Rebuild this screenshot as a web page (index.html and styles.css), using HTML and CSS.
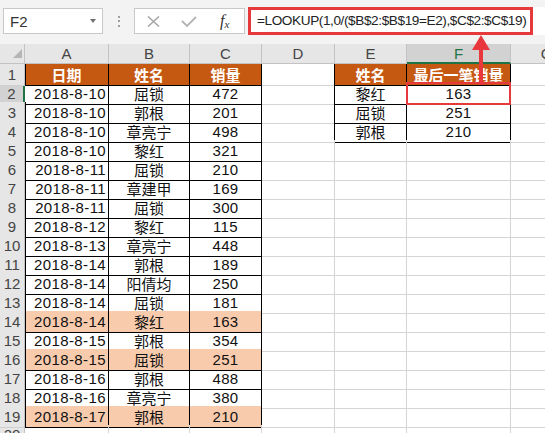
FILE: index.html
```
<!DOCTYPE html>
<html lang="zh">
<head>
<meta charset="utf-8">
<link rel="stylesheet" href="styles.css">
</head>
<body>
<div class="app">
  <div class="toolbar">
    <div class="namebox"><span class="name">F2</span><span class="drop"></span></div>
    <div class="grip"><i></i><i></i><i></i></div>
    <div class="fxbox">
      <svg class="ico-x" width="13" height="11" viewBox="0 0 13 11"><path d="M1 0.5 L12 10.5 M12 0.5 L1 10.5" stroke="#a8a8a8" stroke-width="1.6" fill="none"/></svg>
      <svg class="ico-ok" width="16" height="11" viewBox="0 0 16 11"><path d="M1 5 L6 10 L15 1" stroke="#b4b4b4" stroke-width="1.8" fill="none"/></svg>
      <span class="fx">f<sub>x</sub></span>
    </div>
    <div class="formula"><div class="fbox">=LOOKUP(1,0/($B$2:$B$19=E2),$C$2:$C$19)</div></div>
  </div>

  <div class="sheet">
    <div class="row colhdr">
      <div class="ch corner"><span class="tri"></span></div>
      <div class="ch">A</div><div class="ch">B</div><div class="ch">C</div><div class="ch">D</div><div class="ch">E</div><div class="ch chsel">F</div><div class="ch">G</div>
    </div>

    <div class="row"><div class="rh rb">1</div><div class="c t hd">日期</div><div class="c t hd">姓名</div><div class="c t hd">销量</div><div class="c dr"></div><div class="c t hd">姓名</div><div class="c t hd">最后一笔销量</div><div class="c"></div></div>
    <div class="row"><div class="rh rsel">2</div><div class="c t date">2018-8-10</div><div class="c t">屈锁</div><div class="c t num">472</div><div class="c dr"></div><div class="c t">黎红</div><div class="c t num sel">163</div><div class="c"></div></div>
    <div class="row"><div class="rh rb">3</div><div class="c t date">2018-8-10</div><div class="c t">郭根</div><div class="c t num">201</div><div class="c dr"></div><div class="c t">屈锁</div><div class="c t num">251</div><div class="c"></div></div>
    <div class="row"><div class="rh rb">4</div><div class="c t date">2018-8-10</div><div class="c t">章亮宁</div><div class="c t num">498</div><div class="c dr"></div><div class="c t">郭根</div><div class="c t num">210</div><div class="c"></div></div>
    <div class="row"><div class="rh rb">5</div><div class="c t date">2018-8-10</div><div class="c t">黎红</div><div class="c t num">321</div><div class="c"></div><div class="c"></div><div class="c"></div><div class="c"></div></div>
    <div class="row"><div class="rh rb">6</div><div class="c t date">2018-8-11</div><div class="c t">屈锁</div><div class="c t num">210</div><div class="c"></div><div class="c"></div><div class="c"></div><div class="c"></div></div>
    <div class="row"><div class="rh rb">7</div><div class="c t date">2018-8-11</div><div class="c t">章建甲</div><div class="c t num">169</div><div class="c"></div><div class="c"></div><div class="c"></div><div class="c"></div></div>
    <div class="row"><div class="rh rb">8</div><div class="c t date">2018-8-11</div><div class="c t">屈锁</div><div class="c t num">300</div><div class="c"></div><div class="c"></div><div class="c"></div><div class="c"></div></div>
    <div class="row"><div class="rh rb">9</div><div class="c t date">2018-8-12</div><div class="c t">黎红</div><div class="c t num">115</div><div class="c"></div><div class="c"></div><div class="c"></div><div class="c"></div></div>
    <div class="row"><div class="rh rb">10</div><div class="c t date">2018-8-13</div><div class="c t">章亮宁</div><div class="c t num">448</div><div class="c"></div><div class="c"></div><div class="c"></div><div class="c"></div></div>
    <div class="row"><div class="rh rb">11</div><div class="c t date">2018-8-14</div><div class="c t">郭根</div><div class="c t num">189</div><div class="c"></div><div class="c"></div><div class="c"></div><div class="c"></div></div>
    <div class="row"><div class="rh rb">12</div><div class="c t date">2018-8-14</div><div class="c t">阳倩均</div><div class="c t num">250</div><div class="c"></div><div class="c"></div><div class="c"></div><div class="c"></div></div>
    <div class="row"><div class="rh rb">13</div><div class="c t date">2018-8-14</div><div class="c t">屈锁</div><div class="c t num">181</div><div class="c"></div><div class="c"></div><div class="c"></div><div class="c"></div></div>
    <div class="row"><div class="rh rb">14</div><div class="c t hl date">2018-8-14</div><div class="c t hl">黎红</div><div class="c t hl num">163</div><div class="c"></div><div class="c"></div><div class="c"></div><div class="c"></div></div>
    <div class="row"><div class="rh rb">15</div><div class="c t date">2018-8-15</div><div class="c t">郭根</div><div class="c t num">354</div><div class="c"></div><div class="c"></div><div class="c"></div><div class="c"></div></div>
    <div class="row"><div class="rh rb">16</div><div class="c t hl date">2018-8-15</div><div class="c t hl">屈锁</div><div class="c t hl num">251</div><div class="c"></div><div class="c"></div><div class="c"></div><div class="c"></div></div>
    <div class="row"><div class="rh rb">17</div><div class="c t date">2018-8-16</div><div class="c t">郭根</div><div class="c t num">488</div><div class="c"></div><div class="c"></div><div class="c"></div><div class="c"></div></div>
    <div class="row"><div class="rh rb">18</div><div class="c t date">2018-8-16</div><div class="c t">章亮宁</div><div class="c t num">380</div><div class="c"></div><div class="c"></div><div class="c"></div><div class="c"></div></div>
    <div class="row"><div class="rh rb">19</div><div class="c t hl date">2018-8-17</div><div class="c t hl">郭根</div><div class="c t hl num">210</div><div class="c"></div><div class="c"></div><div class="c"></div><div class="c"></div></div>
    <div class="row"><div class="rh">20</div><div class="c"></div><div class="c"></div><div class="c"></div><div class="c"></div><div class="c"></div><div class="c"></div><div class="c"></div></div>
  </div>

  <svg class="arrow" width="20" height="50" viewBox="0 0 20 50"><path d="M10 0 L19 15 L12 15 L12 50 L8 50 L8 15 L1 15 Z" fill="#e8383d"/></svg>
</div>
</body>
</html>
```
FILE: styles.css
```
html, body {
  margin: 0;
  padding: 0;
  width: 545px;
  height: 433px;
  overflow: hidden;
  background: #fff;
}

.app {
  position: relative;
  width: 545px;
  height: 433px;
  overflow: hidden;
  font-family: "Liberation Sans", "Noto Sans CJK SC", sans-serif;
}

/* ---------- formula toolbar ---------- */
.toolbar {
  display: flex;
  align-items: flex-start;
  height: 44px;
  box-sizing: border-box;
  padding-top: 8px;
  background: #f3f3f3;
}

.namebox {
  margin-left: 3px;
  width: 100px;
  height: 26px;
  box-sizing: border-box;
  background: #fff;
  border: 1px solid #c9c9c9;
  display: flex;
  align-items: center;
  justify-content: space-between;
  padding: 0 6px 0 6px;
}

.name {
  font-size: 15px;
  color: #333;
}

.drop {
  width: 0;
  height: 0;
  border-left: 3.5px solid transparent;
  border-right: 3.5px solid transparent;
  border-top: 4px solid #707070;
}

.grip {
  width: 31px;
  height: 26px;
  display: flex;
  flex-direction: column;
  align-items: center;
  justify-content: center;
  gap: 2.5px;
}

.grip i {
  width: 2px;
  height: 2px;
  background: #a0a0a0;
}

.fxbox {
  width: 111px;
  height: 26px;
  box-sizing: border-box;
  background: #fff;
  border: 1px solid #c9c9c9;
  display: flex;
  align-items: center;
  padding-left: 12px;
}

.ico-x { margin-right: 21px; }
.ico-ok { margin-right: 23px; }

.fx {
  font-family: "Liberation Serif", serif;
  font-style: italic;
  font-size: 16px;
  color: #333;
  line-height: 1;
}

.fx sub {
  font-size: 11px;
  vertical-align: -2px;
}

.formula {
  margin-left: 3px;
  margin-top: -1px;
  flex: 1;
  height: 28px;
  background: #fff;
}

.fbox {
  width: 285px;
  height: 28px;
  box-sizing: border-box;
  border: 3px solid #e5393c;
  padding-left: 6px;
  font-family: "Liberation Sans", sans-serif;
  font-size: 13.6px;
  letter-spacing: -0.4px;
  line-height: 22px;
  color: #222;
  white-space: nowrap;
}

/* ---------- sheet ---------- */
.sheet {
  width: 600px;
}

.row {
  display: grid;
  grid-template-columns: 25px 84px 81px 72px 73px 72px 104px 72px;
  height: 19px;
}

.row.colhdr {
  height: 20px;
}

.c, .rh, .ch {
  box-sizing: border-box;
  border-right: 1px solid #d4d4d4;
  border-bottom: 1px solid #d4d4d4;
  display: flex;
  align-items: center;
  justify-content: center;
  font-size: 15px;
  color: #111;
  white-space: nowrap;
  overflow: visible;
}

.ch {
  background: #e6e6e6;
  color: #444;
  border-right-color: #c3c3c3;
  border-bottom-color: #c3c3c3;
}

.chsel {
  background: #d2d2d2;
  color: #217346;
  border-bottom: 2px solid #217346;
}

.corner {
  align-items: flex-end;
  justify-content: flex-end;
  padding: 0 2px 5px 0;
}

.tri {
  width: 0;
  height: 0;
  border-left: 9px solid transparent;
  border-bottom: 9px solid #b5b5b5;
}

.rh {
  background: #e6e6e6;
  color: #444;
  border-right-color: #c3c3c3;
  border-bottom-color: #cfcfcf;
}

.rh.rb {
  box-shadow: 1px 0 0 #000;
  position: relative;
  z-index: 1;
}

.rh.rsel {
  background: #d2d2d2;
  border-right: 2px solid #217346;
}

.t {
  border-right-color: #000;
  border-bottom-color: #000;
}

.dr {
  border-right-color: #000;
}

.hd {
  background: #c65911;
  color: #fff;
  font-weight: bold;
}

.hl {
  background: #f8cbad;
}

.date {
  justify-content: flex-end;
  padding-right: 2px;
  letter-spacing: 0.4px;
}

.num {
  letter-spacing: 0.3px;
}

.sel {
  position: relative;
}

.sel::after {
  content: "";
  position: absolute;
  top: -1px;
  left: -1px;
  right: -1px;
  bottom: -1px;
  border: 2px solid #e5393c;
  z-index: 2;
}

.arrow {
  position: absolute;
  left: 471px;
  top: 35px;
  z-index: 3;
}
```
